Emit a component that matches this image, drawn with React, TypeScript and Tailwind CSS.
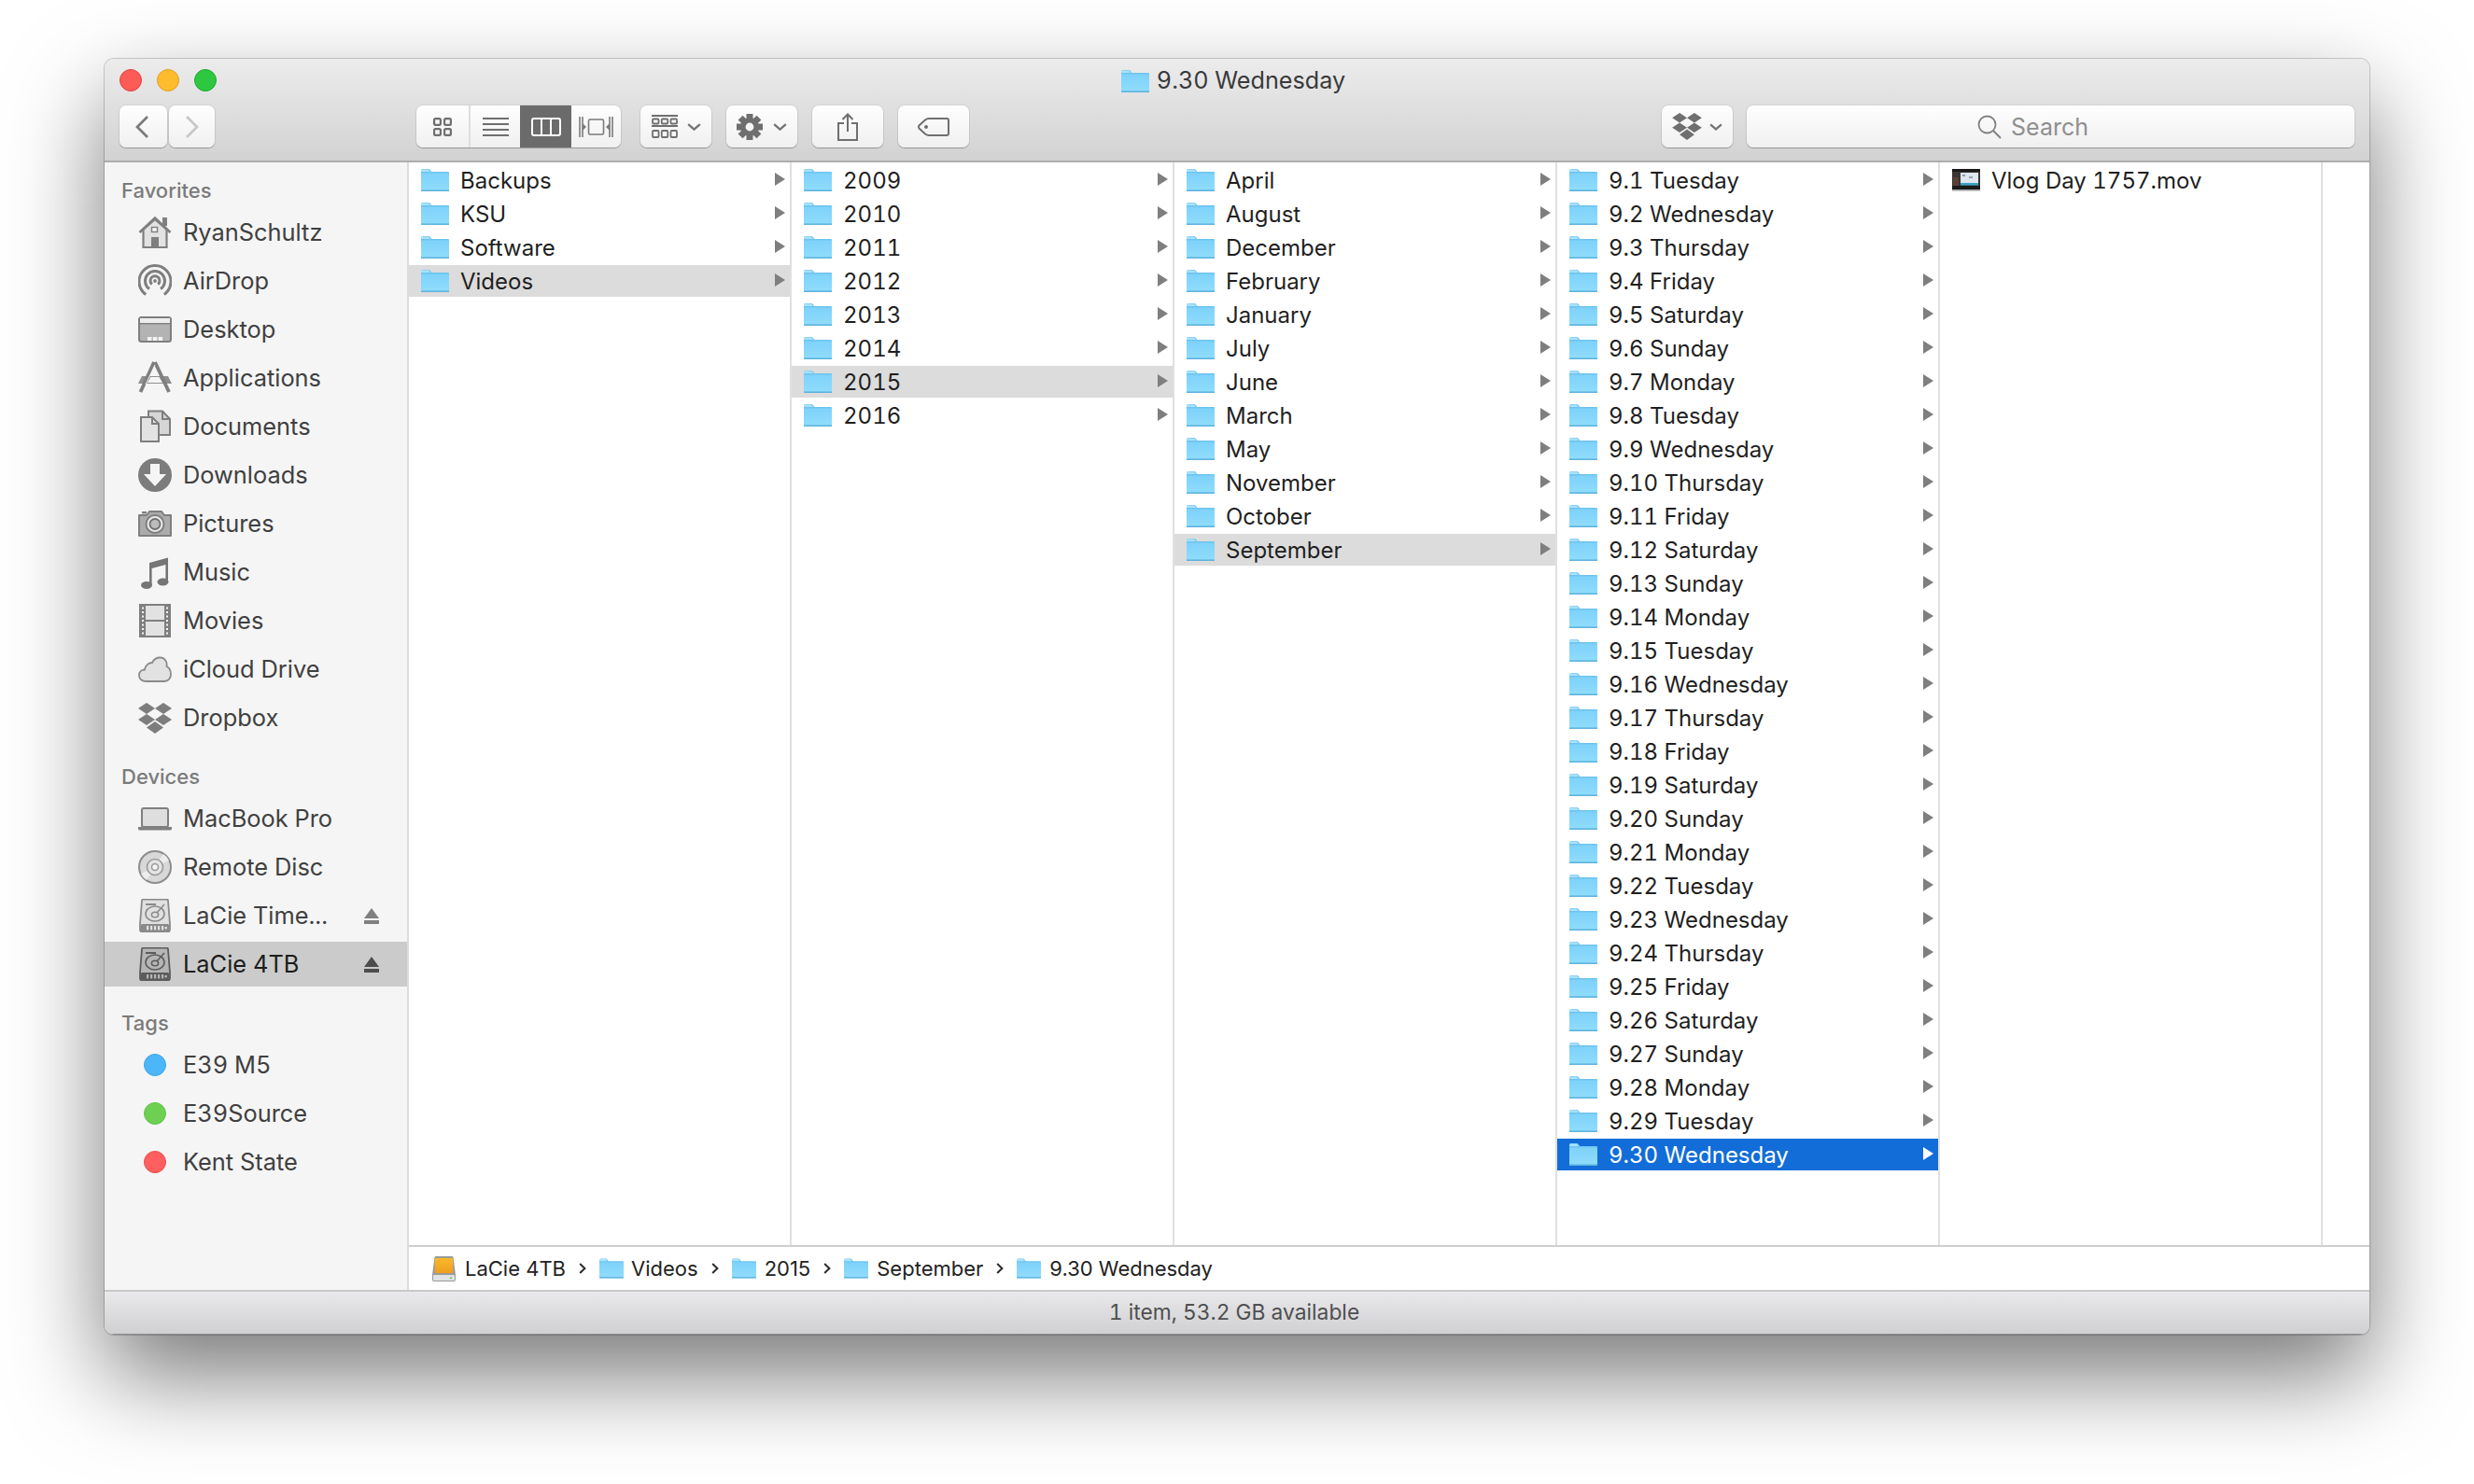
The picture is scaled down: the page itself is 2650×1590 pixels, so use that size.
import React from "react";

const FolderIcon = ({ w = 30, h = 24 }: { w?: number; h?: number }) => (
  <svg width={w} height={h} viewBox="0 0 30 24" className="shrink-0">
    <defs>
      <linearGradient id="fbody" x1="0" y1="0" x2="0" y2="1">
        <stop offset="0" stopColor="#7ed2fa" />
        <stop offset="1" stopColor="#8fdcfd" />
      </linearGradient>
    </defs>
    <path d="M0 2 Q0 0 2 0 H8 Q9 0 10 1.2 L11.2 3 H29 Q30 3 30 4 V23 Q30 24 29 24 H1 Q0 24 0 23 Z" fill="#6ec4ef" />
    <path d="M0 5.5 Q0 4.5 1 4.5 H29 Q30 4.5 30 5.5 V22 Q30 22.6 29 22.6 H1 Q0 22.6 0 22 Z" fill="url(#fbody)" />
    <path d="M0 1.4 Q0 .6 1.6 .6 H8 L10 3 H0 Z" fill="#a9e2fb" />
    <rect x="0" y="22.6" width="30" height="1.4" fill="#5fb3dd" />
  </svg>
);

const Arrow = ({ white }: { white?: boolean }) => (
  <svg width="11" height="14" viewBox="0 0 11 14" className="shrink-0">
    <path d="M0 0 L11 7 L0 14 Z" fill={white ? "#ffffff" : "#7f7f7f"} />
  </svg>
);

const Chev = ({ color = "#747474", w = 15, h = 8 }: { color?: string; w?: number; h?: number }) => (
  <svg width={w} height={h} viewBox="0 0 15 8" className="shrink-0">
    <path d="M1.2 1.2 L7.5 6.6 L13.8 1.2" fill="none" stroke={color} strokeWidth="2.4" />
  </svg>
);

const DropboxGlyph = ({ w, h, fill = "#7a7a7a" }: { w: number; h: number; fill?: string }) => (
  <svg width={w} height={h} viewBox="0 0 36 33" className="shrink-0">
    <g fill={fill}>
      <polygon points="9,0 18,6 9,12 0,6" />
      <polygon points="27,0 36,6 27,12 18,6" />
      <polygon points="9,12 18,18 9,24 0,18" />
      <polygon points="27,12 36,18 27,24 18,18" />
      <polygon points="18,20 27,26.5 18,33 9,26.5" />
    </g>
  </svg>
);

const G = "#7f7f7f";
const L = "#e2e2e2";

const Box = ({ children }: { children: React.ReactNode }) => (
  <svg width="36" height="36" viewBox="0 0 36 36" className="shrink-0">
    {children}
  </svg>
);

const House = () => (
  <Box>
    <rect x="26" y="2" width="5" height="9" fill={G} />
    <path d="M5.5 15 V34 H30.5 V15 L18 4 Z" fill={L} stroke={G} strokeWidth="2.2" />
    <path d="M1.5 18 L18 2.5 L34.5 18" fill="none" stroke={G} strokeWidth="2.6" />
    <rect x="14.5" y="12.5" width="6" height="5" fill="#f5f5f5" stroke={G} strokeWidth="1.4" />
    <rect x="14" y="23" width="8" height="11" fill={G} />
  </Box>
);
const AirDrop = () => (
  <Box>
    <g fill="none" stroke={G} strokeWidth="3">
      <path d="M8.2 32.5 A17 17 0 1 1 27.8 32.5" />
      <path d="M12 26.6 A10.5 10.5 0 1 1 24 26.6" />
      <path d="M14.8 21.6 A5 5 0 1 1 21.2 21.6" />
    </g>
    <circle cx="18" cy="18" r="1.9" fill={G} />
  </Box>
);
const Desktop = () => (
  <Box>
    <rect x="1" y="5" width="34" height="26" rx="2.5" fill="#b3b3b3" stroke={G} strokeWidth="2" />
    <rect x="2" y="6" width="32" height="5" fill="#eeeeee" />
    <rect x="2" y="11" width="32" height="1.4" fill={G} />
    <rect x="10" y="26" width="4.5" height="4" fill="#f2f2f2" />
    <rect x="15.8" y="26" width="4.5" height="4" fill="#f2f2f2" />
    <rect x="21.6" y="26" width="4.5" height="4" fill="#f2f2f2" />
  </Box>
);
const Apps = () => (
  <Box>
    <path d="M0 24 L4 16 H32 L36 24 Z" fill="#8f8f8f" />
    <path d="M10 23 L13.5 17 H22.5 L26 23 Z" fill="#f5f5f5" />
    <path d="M17 1 L2.5 33" stroke={G} strokeWidth="3.8" />
    <path d="M18 1 L33 33" stroke={G} strokeWidth="3.8" />
    <path d="M18 4 L8 25" stroke="#f5f5f5" strokeWidth="1" />
  </Box>
);
const Docs = () => (
  <Box>
    <path d="M11 1.5 H26 L34 10 V27 H11 Z" fill="#d6d6d6" stroke={G} strokeWidth="2" />
    <path d="M26 1.5 V10 H34" fill="none" stroke={G} strokeWidth="2" />
    <path d="M3 8 H15 L22 15 V34 H3 Z" fill={L} stroke={G} strokeWidth="2" />
    <path d="M15 8 V15 H22" fill="none" stroke={G} strokeWidth="2" />
  </Box>
);
const Downloads = () => (
  <Box>
    <circle cx="18" cy="18" r="18" fill="#7c7c7c" />
    <path d="M13 6 H23 V17 H30 L18 30 L6 17 H13 Z" fill="#f5f5f5" />
  </Box>
);
const Camera = () => (
  <Box>
    <path d="M1 9 H9 L12 5 H25 L28 9 H35 V31 H1 Z" fill="#ababab" stroke={G} strokeWidth="2" strokeLinejoin="round" />
    <rect x="4" y="5" width="5" height="2.4" fill={G} />
    <circle cx="18" cy="18.5" r="9.5" fill="#e8e8e8" stroke={G} strokeWidth="2" />
    <circle cx="18" cy="18.5" r="5.5" fill="#bdbdbd" stroke="#707070" strokeWidth="1.8" />
  </Box>
);
const Music = () => (
  <Box>
    <path d="M12 8 L32 2.5 V28 H29.4 V10 L14.6 14 V32 H12 Z" fill="#757575" />
    <ellipse cx="9" cy="32" rx="6" ry="4" fill="#757575" />
    <ellipse cx="26.5" cy="28.5" rx="6" ry="4" fill="#757575" />
  </Box>
);
const Movies = () => (
  <Box>
    <rect x="2" y="1" width="32" height="34" fill={L} stroke={G} strokeWidth="2" />
    <rect x="2" y="1" width="6" height="34" fill={G} />
    <rect x="28" y="1" width="6" height="34" fill={G} />
    <rect x="8" y="17" width="20" height="2" fill={G} />
    {[3.5, 8, 12.5, 17, 21.5, 26, 30.5].map((y) => (
      <g key={y} fill="#f5f5f5">
        <rect x="4" y={y} width="2" height="2" />
        <rect x="30" y={y} width="2" height="2" />
      </g>
    ))}
  </Box>
);
const Cloud = () => (
  <Box>
    <path d="M8 31 C3 31 1 27.5 1 24.5 C1 20.5 4 18.5 7 18.5 C8 13 12 11 15 11 C17 7 20.5 5.5 23.5 5.5 C28 5.5 31.5 9.5 30.5 15 C33.5 16.5 35 20 35 23.5 C35 28 32 31 28 31 Z" fill={L} stroke="#8a8a8a" strokeWidth="1.8" />
  </Box>
);
const Dropbox = () => <DropboxGlyph w={36} h={33} fill="#7d7d7d" />;
const Laptop = () => (
  <Box>
    <rect x="4" y="7" width="28" height="20" rx="2" fill="#dedede" stroke={G} strokeWidth="2" />
    <path d="M0 27 H36 V29 Q36 30.5 34 30.5 H2 Q0 30.5 0 29 Z" fill={G} />
  </Box>
);
const Disc = () => (
  <Box>
    <circle cx="18" cy="18" r="17" fill="#d8d8d8" stroke="#8c8c8c" strokeWidth="2" />
    <path d="M18 18 L27 4 A17 17 0 0 1 33 11 Z" fill="#ececec" />
    <path d="M18 18 L9 32 A17 17 0 0 1 3 25 Z" fill="#ececec" />
    <circle cx="18" cy="18" r="8.5" fill="#e4e4e4" stroke="#9a9a9a" strokeWidth="1.6" />
    <circle cx="18" cy="18" r="3.5" fill="#f5f5f5" stroke="#9a9a9a" strokeWidth="1.6" />
  </Box>
);
const Hdd = ({ sel }: { sel?: boolean }) => {
  const s = sel ? "#5c5c5c" : "#8a8a8a";
  const f = sel ? "#b5b5b5" : "#e0e0e0";
  return (
    <Box>
      <path d="M4 2 Q4 .5 6 .5 H30 Q32 .5 32 2 L34 27 V33 Q34 35.5 31.5 35.5 H4.5 Q2 35.5 2 33 V27 Z" fill={f} stroke={s} strokeWidth="1.8" />
      <rect x="2.8" y="27" width="30.4" height="8" rx="1.5" fill={s} />
      <rect x="8" y="5" width="11" height="2" fill={s} />
      <ellipse cx="18" cy="16" rx="10" ry="8" fill="none" stroke={s} strokeWidth="1.6" />
      <ellipse cx="18" cy="17" rx="3.6" ry="2.8" fill="none" stroke={s} strokeWidth="1.6" />
      <path d="M20 15 L28 6" stroke={s} strokeWidth="1.6" />
      {[9, 13, 17, 21, 25].map((x) => (
        <rect key={x} x={x} y="29" width="2.2" height="4.4" fill={f} />
      ))}
      <rect x="28.5" y="30" width="2.4" height="2.4" fill={f} />
    </Box>
  );
};
const Dot = ({ c, b }: { c: string; b: string }) => (
  <Box>
    <circle cx="18" cy="18" r="11.5" fill={c} stroke={b} strokeWidth="1" />
  </Box>
);
const Eject = ({ sel }: { sel?: boolean }) => (
  <svg width="16" height="17" viewBox="0 0 16 17" className="shrink-0">
    <path d="M8 0 L16 11 H0 Z M0 13 H16 V17 H0 Z" fill={sel ? "#4d4d4d" : "#808080"} />
  </svg>
);

type SI = { n: string; i: React.ReactNode; e?: boolean; s?: boolean };

const SLabel = ({ t, cls }: { t: string; cls: string }) => (
  <div className={`h-[30px] pl-[18px] flex items-center text-[22px] font-medium text-[#7b7b7b] ${cls}`}>{t}</div>
);

const SItems = ({ items }: { items: SI[] }) => (
  <div className="flex flex-col gap-[4px]">
    {items.map((it) => (
      <div key={it.n} className={`h-[48px] flex items-center pl-[36px] text-[25.4px] tabular-nums ${it.s ? "bg-[#cbcbcb] text-[#1c1c1c]" : "text-[#404040]"}`}>
        {it.i}
        <span className="ml-[12px] flex-1 whitespace-nowrap">{it.n}</span>
        {it.e && <span className="mr-[30px] flex"><Eject sel={it.s} /></span>}
      </div>
    ))}
  </div>
);

const months = ["April", "August", "December", "February", "January", "July", "June", "March", "May", "November", "October", "September"];
const dn = ["Tuesday", "Wednesday", "Thursday", "Friday", "Saturday", "Sunday", "Monday"];
const days = Array.from({ length: 30 }, (_, i) => `9.${i + 1} ${dn[i % 7]}`);

const MovieThumb = () => (
  <svg width="30" height="24" viewBox="0 0 30 24" className="shrink-0">
    <rect x="0" y="0" width="30" height="22.5" fill="#1a1a1a" />
    <rect x="0" y="3" width="30" height="15" fill="#3a3532" />
    <rect x="1" y="9" width="6" height="9" fill="#5a4034" />
    <rect x="9" y="4" width="19" height="11" fill="#dfe7f0" />
    <rect x="11" y="6" width="3" height="2" fill="#8d9aa8" />
    <rect x="18" y="8" width="4" height="2" fill="#9aa5b2" />
    <rect x="9" y="15" width="19" height="2.6" fill="#39a6c4" />
    <rect x="0" y="22.5" width="30" height="1.5" fill="#c4c4c4" />
  </svg>
);

const Column = ({ items, active, hot, movie }: { items: string[]; active?: string; hot?: boolean; movie?: boolean }) => (
  <div className="w-[410px] shrink-0 h-full border-r-2 border-[#e0e0e0] pt-[2px] flex flex-col gap-[2px]">
    {items.map((t) => {
      const on = t === active;
      return (
        <div key={t} className={`h-[34px] shrink-0 flex items-center pl-[13px] pr-[5px] text-[24px] tabular-nums ${on ? (hot ? "bg-[#126dd8] text-white" : "bg-[#dcdcdc] text-[#1f1f1f]") : "text-[#1f1f1f]"}`}>
          {movie ? <MovieThumb /> : <FolderIcon />}
          <span className="ml-[12px] pt-[1px] flex-1 whitespace-nowrap">{t}</span>
          {!movie && <span className="flex -mt-[2px]"><Arrow white={on && hot} /></span>}
        </div>
      );
    })}
  </div>
);

const btn = "h-[45px] rounded-[7px] bg-linear-to-b from-[#fefefe] to-[#f0f0f0] shadow-[0_0_0_1px_rgba(0,0,0,0.06),0_1px_1px_rgba(0,0,0,0.25)] flex items-center justify-center";

const Gear = () => (
  <svg width="28" height="28" viewBox="0 0 28 28" className="shrink-0">
    <g fill="#6f6f6f">
      {[0, 45, 90, 135].map((a) => (
        <rect key={a} x="10.5" y="0" width="7" height="28" transform={`rotate(${a} 14 14)`} />
      ))}
    </g>
    <circle cx="14" cy="14" r="10" fill="#6f6f6f" />
    <circle cx="14" cy="14" r="4.4" fill="#f6f6f6" />
  </svg>
);

const PathChev = () => (
  <svg width="8" height="12" viewBox="0 0 8 12" className="mx-[14px] shrink-0">
    <path d="M1.2 1 L6.4 6 L1.2 11" fill="none" stroke="#2b2b2b" strokeWidth="2" />
  </svg>
);

const DriveSmall = () => (
  <svg width="25" height="27" viewBox="0 0 25 27" className="shrink-0">
    <defs>
      <linearGradient id="drv" x1="0" y1="0" x2="0" y2="1">
        <stop offset="0" stopColor="#fbb92c" />
        <stop offset="1" stopColor="#ee9e1e" />
      </linearGradient>
    </defs>
    <path d="M2.5 1 Q2.5 0 4 0 H21 Q22.5 0 22.5 1 L25 20 V25 Q25 27 23 27 H2 Q0 27 0 25 V20 Z" fill="#9a9a9a" />
    <rect x="2.8" y="2" width="19.4" height="16" fill="url(#drv)" />
    <rect x="1" y="20" width="23" height="6" rx="1" fill="#dfe3e3" />
    <rect x="19" y="22.5" width="2" height="1.6" fill="#5ac85a" />
  </svg>
);

export default function App() {
  return (
    <div className="w-[2650px] h-[1590px] bg-white pt-[63px] pl-[112px] overflow-hidden font-[family-name:Inter,sans-serif]">
      <div className="w-[2426px] h-[1367px] rounded-[10px] overflow-hidden flex flex-col shadow-[0_44px_100px_rgba(0,0,0,0.53),0_0_0_1px_rgba(0,0,0,0.18)]">
        {/* toolbar */}
        <div className="h-[111px] shrink-0 border-b-2 border-[#adadad] bg-linear-to-b from-[#ececed] to-[#d2d2d3]">
          <div className="h-[50px] pb-[2px] grid grid-cols-[1fr_auto_1fr] items-center">
            <div className="flex gap-[16px] pl-[16px] -mt-[2px]">
              <div className="w-[24px] h-[24px] rounded-full bg-[#fc5b57] border border-[#e0443e]" />
              <div className="w-[24px] h-[24px] rounded-full bg-[#fdbc2e] border border-[#dea123]" />
              <div className="w-[24px] h-[24px] rounded-full bg-[#2dc840] border border-[#1aab29]" />
            </div>
            <div className="flex items-center gap-[8px] pr-[8px] text-[25.2px] tabular-nums text-[#3a3a3a]">
              <FolderIcon />
              <span>9.30 Wednesday</span>
            </div>
            <div />
          </div>
          <div className="h-[45px] pl-[16px] pr-[16px] flex">
            <div className={`${btn} w-[51px] pr-[4px]`}>
              <svg width="14" height="24" viewBox="0 0 14 24"><path d="M13 1 L2 12 L13 23" fill="none" stroke="#7b7b7b" strokeWidth="2.8" /></svg>
            </div>
            <div className={`${btn} w-[49px] ml-[2px]`}>
              <svg width="14" height="24" viewBox="0 0 14 24"><path d="M1 1 L12 12 L1 23" fill="none" stroke="#c8c8c8" strokeWidth="2.8" /></svg>
            </div>
            <div className={`${btn} w-[219px] ml-[216px] !justify-start overflow-hidden`}>
              <div className="w-[58px] h-full flex items-center justify-center border-r-2 border-[#dedede]">
                <svg width="20" height="20" viewBox="0 0 20 20"><g fill="none" stroke="#6f6f6f" strokeWidth="2.2"><rect x="1.1" y="1.1" width="6.8" height="6.8" rx="1.4" /><rect x="12.1" y="1.1" width="6.8" height="6.8" rx="1.4" /><rect x="1.1" y="12.1" width="6.8" height="6.8" rx="1.4" /><rect x="12.1" y="12.1" width="6.8" height="6.8" rx="1.4" /></g></svg>
              </div>
              <div className="w-[53px] h-full flex items-center justify-center">
                <svg width="28" height="20" viewBox="0 0 28 20"><g fill="#6f6f6f"><rect y="0" width="28" height="2" /><rect y="6" width="28" height="2" /><rect y="12" width="28" height="2" /><rect y="18" width="28" height="2" /></g></svg>
              </div>
              <div className="w-[55px] h-full flex items-center justify-center bg-[#6b6b6b]">
                <svg width="32" height="20" viewBox="0 0 32 20"><g fill="none" stroke="#ffffff" strokeWidth="2"><rect x="1" y="1" width="30" height="18" rx="2" /><path d="M11 1 V19 M21 1 V19" /></g></svg>
              </div>
              <div className="w-[53px] h-full flex items-center justify-center">
                <svg width="37" height="22" viewBox="0 0 37 22"><g fill="none" stroke="#7a7a7a" strokeWidth="1.6"><rect x="10.5" y="3" width="16" height="16" rx="1.5" /><path d="M1 0 V22 M36 0 V22 M33 0 V22 M4 0 V22" /></g><path d="M4 7 L8 11 L4 15 Z M33 7 L29 11 L33 15 Z" fill="#7a7a7a" /></svg>
              </div>
            </div>
            <div className={`${btn} w-[76px] ml-[21px] gap-[10px]`}>
              <svg width="28" height="25" viewBox="0 0 28 25">
                <g fill="#6f6f6f"><rect width="28" height="2" /><rect y="11" width="28" height="2" /></g>
                <g fill="none" stroke="#6f6f6f" strokeWidth="1.8"><rect x="1" y="4.5" width="6.5" height="5" rx="1" /><rect x="10.75" y="4.5" width="6.5" height="5" rx="1" /><rect x="20.5" y="4.5" width="6.5" height="5" rx="1" /><rect x="1" y="17" width="6.5" height="7" rx="1" /><rect x="10.75" y="17" width="6.5" height="7" rx="1" /><rect x="20.5" y="17" width="6.5" height="7" rx="1" /></g>
              </svg>
              <Chev />
            </div>
            <div className={`${btn} w-[76px] ml-[16px] gap-[11px]`}>
              <Gear />
              <Chev />
            </div>
            <div className={`${btn} w-[76px] ml-[16px]`}>
              <svg width="22" height="30" viewBox="0 0 22 30"><g fill="none" stroke="#6f6f6f" strokeWidth="2"><path d="M7 11 H1 V29 H21 V11 H15" /><path d="M11 20 V1.5 M5.5 7 L11 1.5 L16.5 7" /></g></svg>
            </div>
            <div className={`${btn} w-[76px] ml-[16px]`}>
              <svg width="34" height="20" viewBox="0 0 34 20"><path d="M12 1 H31 Q33 1 33 3 V17 Q33 19 31 19 H12 Q10 19 8 17.5 L1.5 11.5 Q.5 10 1.5 8.5 L8 2.5 Q10 1 12 1 Z" fill="none" stroke="#6f6f6f" strokeWidth="2" /><circle cx="9" cy="10" r="2" fill="#6f6f6f" /></svg>
            </div>
            <div className="flex-1" />
            <div className={`${btn} w-[76px] gap-[8px]`}>
              <DropboxGlyph w={32} h={29} fill="#6f6f6f" />
              <Chev w={14} />
            </div>
            <div className={`${btn} w-[651px] ml-[15px] gap-[10px] pr-[38px] text-[25px] text-[#8f8f8f]`}>
              <svg width="26" height="26" viewBox="0 0 26 26"><circle cx="10.5" cy="10.5" r="9" fill="none" stroke="#808080" strokeWidth="1.8" /><path d="M17 17 L25 25" stroke="#808080" strokeWidth="2" /></svg>
              <span className="pt-[3px]">Search</span>
            </div>
          </div>
        </div>

        {/* body */}
        <div className="h-[1208px] shrink-0 flex">
          <div className="w-[326px] shrink-0 bg-[#f5f5f5] border-r-2 border-[#dcdcdc] pt-[15px]">
            <SLabel t="Favorites" cls="mb-[6px]" />
            <SItems
              items={[
                { n: "RyanSchultz", i: <House /> },
                { n: "AirDrop", i: <AirDrop /> },
                { n: "Desktop", i: <Desktop /> },
                { n: "Applications", i: <Apps /> },
                { n: "Documents", i: <Docs /> },
                { n: "Downloads", i: <Downloads /> },
                { n: "Pictures", i: <Camera /> },
                { n: "Music", i: <Music /> },
                { n: "Movies", i: <Movies /> },
                { n: "iCloud Drive", i: <Cloud /> },
                { n: "Dropbox", i: <Dropbox /> },
              ]}
            />
            <SLabel t="Devices" cls="mt-[24px] mb-[6px]" />
            <SItems
              items={[
                { n: "MacBook Pro", i: <Laptop /> },
                { n: "Remote Disc", i: <Disc /> },
                { n: "LaCie Time...", i: <Hdd />, e: true },
                { n: "LaCie 4TB", i: <Hdd sel />, e: true, s: true },
              ]}
            />
            <SLabel t="Tags" cls="mt-[24px] mb-[6px]" />
            <SItems
              items={[
                { n: "E39 M5", i: <Dot c="#4db6f9" b="#3aa5ee" /> },
                { n: "E39Source", i: <Dot c="#6dd053" b="#5fc446" /> },
                { n: "Kent State", i: <Dot c="#ff5f5f" b="#ee4c4c" /> },
              ]}
            />
          </div>
          <div className="flex-1 min-w-0 flex flex-col bg-white">
            <div className="h-[1160px] shrink-0 flex">
              <Column items={["Backups", "KSU", "Software", "Videos"]} active="Videos" />
              <Column items={["2009", "2010", "2011", "2012", "2013", "2014", "2015", "2016"]} active="2015" />
              <Column items={months} active="September" />
              <Column items={days} active="9.30 Wednesday" hot />
              <Column items={["Vlog Day 1757.mov"]} movie />
            </div>
            <div className="h-[48px] shrink-0 border-t-2 border-[#cfcfcf] pl-[25px] flex items-center text-[22px] text-[#222222]">
              <DriveSmall />
              <span className="ml-[10px] pt-[1px]">LaCie 4TB</span>
              <PathChev />
              <FolderIcon w={26} h={22} />
              <span className="ml-[8px] pt-[1px]">Videos</span>
              <PathChev />
              <FolderIcon w={26} h={22} />
              <span className="ml-[9px] pt-[1px]">2015</span>
              <PathChev />
              <FolderIcon w={26} h={22} />
              <span className="ml-[9px] pt-[1px]">September</span>
              <PathChev />
              <FolderIcon w={26} h={22} />
              <span className="ml-[9px] pt-[1px]">9.30 Wednesday</span>
            </div>
          </div>
        </div>

        {/* status */}
        <div className="h-[48px] shrink-0 border-t-2 border-t-[#c9c9c9] border-b border-b-[#8a8a8a] bg-linear-to-b from-[#e9e9eb] to-[#d0d0d2] flex items-center justify-center pr-[6px] text-[22.8px] tabular-nums text-[#4f4f4f]">
          1 item, 53.2 GB available
        </div>
      </div>
    </div>
  );
}
